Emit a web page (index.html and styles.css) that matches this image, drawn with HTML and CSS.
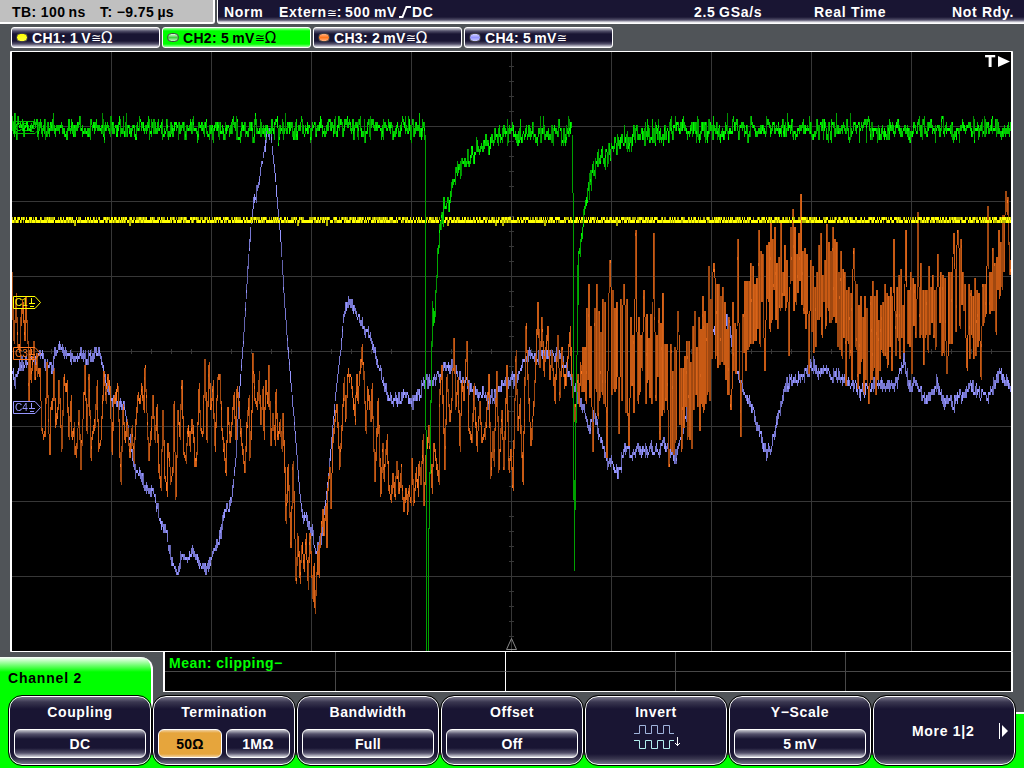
FILE: index.html
```html
<!DOCTYPE html>
<html lang="en">
<head>
  <meta charset="UTF-8">
  <meta name="viewport" content="width=device-width, initial-scale=1.0">
  <title>Oscilloscope</title>
  <link rel="stylesheet" href="styles.css">
</head>
<body>
  <!-- Status bar -->
  <header class="status-bar">
    <div class="timebase">
      <span>TB: 100&#8201;ns</span>
      <span>T: &minus;9.75&#8201;&micro;s</span>
    </div>
    <div class="trigger">
      <span>Norm</span>
      <span class="extern">Extern<i class="sym">&cong;</i>:</span>
      <span>500&#8201;mV</span>
      <svg class="edge" width="13" height="12" viewBox="0 0 13 12"><path d="M0 11H3.5L7.5 1H12" fill="none" stroke="#fff" stroke-width="2"/></svg>
      <span>DC</span>
      <span>2.5&#8201;GSa/s</span>
      <span>Real Time</span>
      <span class="state">Not Rdy.</span>
    </div>
  </header>

  <!-- Channels -->
  <nav class="channels">
    <div class="channel"><b class="led yellow"></b>CH1: 1&#8201;V<i class="sym">&cong;</i><i class="sym ohm">&Omega;</i></div>
    <div class="channel active"><b class="led green"></b>CH2: 5&#8201;mV<i class="sym">&cong;</i><i class="sym ohm">&Omega;</i></div>
    <div class="channel"><b class="led orange"></b>CH3: 2&#8201;mV<i class="sym">&cong;</i><i class="sym ohm">&Omega;</i></div>
    <div class="channel"><b class="led blue"></b>CH4: 5&#8201;mV<i class="sym">&cong;</i></div>
  </nav>

  <!-- Waveforms -->
  <main class="scope">
    <canvas id="plot" width="999" height="599"></canvas>
    <svg class="overlay" width="999" height="599" viewBox="12 52 999 599">
      <g fill="none" stroke-width="1">
        <path class="c1" d="M13.5 296.5H35L40.500 302.500L35 308.500H13.500Z"/>
        <path class="c2" d="M13.500 121.500H35L40.500 127.500L35 133.500H13.500Z"/>
        <path class="c3" d="M13.500 347.500H35L40.500 353.500L35 359.500H13.500Z"/>
        <path class="c4" d="M13.500 401.500H35L40.500 407.500L35 413.500H13.500Z"/>
        <path class="c1" d="M31.500 298V303M29 303.500H35M30 306.500H34"/>
        <path class="c2" d="M31.500 123V128M29 128.500H35M30 131.500H34"/>
        <path class="c3" d="M31.500 349V354M29 354.500H35M30 357.500H34"/>
        <path class="c4" d="M31.500 403V408M29 408.500H35M30 411.500H34"/>
        <path stroke="#8a8a8a" d="M511.500 638.500L506.500 649.500H516.500Z"/>
      </g>
      <g class="tag">
        <text x="15" y="306" fill="#ffff00">C1</text>
        <text x="15" y="131" fill="#00ff00">C2</text>
        <text x="15" y="357" fill="#ff7820">C3</text>
        <text x="15" y="411" fill="#9696ff">C4</text>
      </g>
      <text class="trig-mark" x="985" y="67">T</text>
      <path fill="#fff" d="M998 56L1010 61.500L998 67Z"/>
    </svg>
  </main>

  <!-- Measurement results -->
  <section class="bottom">
    <div class="tab">Channel 2</div>
    <div class="results">
      <div class="cell wide">Mean: clipping&minus;</div><div class="cell"></div><div class="cell"></div><div class="cell"></div><div class="cell last"></div>
      <div class="cell"></div><div class="cell"></div><div class="cell"></div><div class="cell"></div><div class="cell last"></div>
    </div>
  </section>

  <!-- Soft keys -->
  <footer class="softkeys">
    <div class="key"><span class="title">Coupling</span><div class="values"><span class="value">DC</span></div></div>
    <div class="key"><span class="title">Termination</span><div class="values"><span class="value selected">50&Omega;</span><span class="value">1M&Omega;</span></div></div>
    <div class="key"><span class="title">Bandwidth</span><div class="values"><span class="value">Full</span></div></div>
    <div class="key"><span class="title">Offset</span><div class="values"><span class="value">Off</span></div></div>
    <div class="key"><span class="title">Invert</span>
      <svg class="invert" width="48" height="26" viewBox="0 0 48 26" fill="none">
        <path stroke="#a0b4dc" d="M0 9.500H5.500V1.500H11.500V9.500H17.500V1.500H23.500V9.500H29.500V1.500H35.500V9.500H40"/>
        <path stroke="#b4f0f0" d="M0 16.500H5.500V24.500H11.500V16.500H17.500V24.500H23.500V16.500H29.500V24.500H35.500V16.500H40"/>
        <path stroke="#fff" d="M43.500 13V22M41 19L43.500 21.500L46 19"/>
      </svg>
    </div>
    <div class="key"><span class="title">Y&minus;Scale</span><div class="values"><span class="value">5&#8201;mV</span></div></div>
    <div class="key more"><span>More 1|2</span><svg width="10" height="16" viewBox="0 0 10 16"><path d="M.5 0V16" stroke="#fff"/><path d="M3 2L9 8L3 14Z" fill="#fff"/></svg></div>
  </footer>
  <script src="plot.js"></script>
</body>
</html>
```
FILE: plot.js
```js
const canvas = document.getElementById('plot');
const ctx = canvas.getContext('2d');
// use screen coordinates for all trace data
ctx.translate(-12, -52);

let seed = 20;
function rnd() {
  seed = (seed * 1103515245 + 12345) % 2147483648;
  return seed / 2147483648;
}

// Grid
ctx.fillStyle = '#373737';
for (let x = 111; x < 1011; x += 100) ctx.fillRect(x, 52, 1, 600);
for (let y = 126; y < 651; y += 75) ctx.fillRect(12, y, 1000, 1);
for (let x = 31; x < 1011; x += 20) ctx.fillRect(x, 349, 1, 5);
for (let y = 66; y < 651; y += 15) ctx.fillRect(509, y, 5, 1);

function at(points, x, col) {
  for (let i = 1; i < points.length; i++) {
    const a = points[i - 1];
    const b = points[i];
    if (x <= b[0]) {
      return a[col] + (b[col] - a[col]) * (x - a[0]) / Math.max(1, b[0] - a[0]);
    }
  }
  return points[points.length - 1][col];
}

function pairs(text) {
  return text.trim().split(/\s+/).map(p => p.split(',').map(Number));
}

// One pixel wide column, three pixel vertical steps. Long columns are dimmer.
function column(x, y1, y2, colors) {
  const top = Math.round(Math.min(y1, y2) / 3) * 3 - 1;
  const h = Math.max(3, Math.round(Math.abs(y2 - y1) / 3) * 3);
  let c = h <= 4 ? 0 : h < 13 ? 1 : 2;
  if (rnd() < 0.12) c = Math.max(0, c - 1);
  if (h > 15 && rnd() < 0.4) c = 3;
  ctx.fillStyle = colors[c];
  ctx.fillRect(x, top, 1, h);
  // brighter spot where the trace dwells
  if (h > 6 && rnd() < 0.3) {
    ctx.fillStyle = colors[h > 30 ? 1 : 0];
    ctx.fillRect(x, top + Math.floor(rnd() * h / 3) * 3, 1, 3);
  }
}

const BLUE = ['#9696ff', '#7878d2', '#6464af', '#6464af'];
const ORANGE = ['#ff7820', '#d8641a', '#c85a14', '#a04810'];
const GREEN = ['#00ff00', '#00cc00', '#00aa00', '#009000'];

// Channel 4
const ch4 = pairs(`12,375 14,383 18,368 23,362 33,363 40,352 45,368 52,366 55,350 60,346 67,358 73,363
80,353 87,360 97,350 102,365 107,393 115,405 123,406 128,437 135,472 140,477 148,495 152,490 162,530
165,532 172,567 176,577 182,553 187,560 192,550 200,567 206,570 212,557 218,542 224,510 230,507 235,460
238,400 242,347 245,303 247,267 250,227 253,203 257,187 260,172 263,153 266,134 270,134 276,197 280,243
283,293 287,350 293,417 299,497 302,517 307,522 312,537 316,553 320,543 324,507 327,483 331,437 336,383
340,350 343,315 349,300 355,313 362,330 368,337 375,357 382,380 388,403 397,400 405,395 412,402 418,397
423,383 432,383 443,370 453,367 458,377 467,385 475,397 483,392 488,402 497,393 508,380 515,383 520,367
528,355 543,357 557,357 565,367 570,378 577,400 582,407 588,430 593,413 600,443 607,465 612,465 618,475
625,447 630,455 637,450 643,453 652,447 658,453 663,445 670,453 675,457 680,437 690,403 697,377 703,350
720,318 727,323 733,357 737,377 743,392 753,413 762,447 767,455 773,440 780,405 785,387 790,382 800,380
813,365 820,378 824,370 830,380 835,373 842,383 850,383 860,393 868,388 877,382 885,387 892,390 897,380
903,362 910,392 915,378 922,400 930,398 936,382 942,403 948,400 953,407 957,393 963,400 970,387 977,393
987,400 997,377 1003,380 1011,393`);
let prev = 375;
for (let x = 12; x < 1011; x++) {
  const slope = Math.abs(at(ch4, x + 2, 1) - at(ch4, x - 2, 1));
  const steep = slope > 24;
  const y = at(ch4, x, 1) + (rnd() - 0.5) * (steep ? 3 : 10);
  const pad = steep ? 0 : rnd() * 4;
  column(x, Math.min(prev, y) - pad, Math.max(prev, y) + pad, BLUE);
  prev = y;
}

// Channel 3, quiet part
const ch3 = pairs(`12,310 13,343 15,300 17,345 19,351 20,320 22,302 24,340 25,300 27,345 28,399 29,352 30,382
32,360 33,343 34,380 36,355 37,375 39,372 41,430 42,436 44,436 46,365 48,435 49,453 50,410 52,400 53,373
55,425 57,410 58,382 61,450 63,379 65,390 66,390 68,438 70,403 71,437 73,430 74,455 76,445 78,413 80,469
82,420 84,370 86,433 88,376 90,459 91,440 94,420 96,388 98,450 100,440 103,373 105,400 107,377 109,391
111,450 113,400 117,388 119,455 120,483 122,412 124,440 126,425 129,457 131,430 133,460 135,420 137,397
139,405 141,388 143,410 144,370 146,415 148,460 150,435 152,400 154,440 156,412 158,470 160,489 162,410
164,478 166,490 167,445 170,482 172,470 173,409 175,498 177,415 179,435 181,382 183,455 185,462 187,430
189,445 191,420 193,442 194,468 196,455 198,391 200,432 202,435 204,361 206,438 208,367 210,410 212,388
214,446 217,380 219,376 221,430 223,448 225,472 227,410 229,440 231,425 233,395 235,440 236,391 238,405
240,435 244,474 246,425 248,402 249,459 251,412 252,358 254,400 256,405 258,382 260,425 262,391 263,433
265,385 267,405 268,367 270,445 272,415 274,440 275,394 277,440 279,425 281,450 282,415 284,470 285,522
287,470 288,490 290,549 292,467 293,500 295,580 297,538 299,579 301,546 303,568 305,541 307,582 309,535
310,555 312,600 313,568 314,609 316,575 317,553 318,573 319,545 322,510 323,535 325,508 326,546 327,490
329,470 330,507 332,440 335,415 336,406 339,468 341,425 343,385 345,420 347,376 350,378 352,400 354,418
356,376 357,399 361,350 363,378 365,432 367,391 370,420 371,391 374,480 377,403 380,495 382,445 383,478
386,442 388,490 390,502 392,475 394,495 396,463 398,495 400,474 402,500 403,514 405,490 407,513 408,493
410,506 411,460 413,505 415,475 417,490 418,465 420,485 422,442 423,507 425,460 428,427 431,487 433,445
435,460 438,483 439,390 441,367 444,468 446,377 449,423 451,400 453,340 455,407 457,380 459,445 461,383
463,403 466,343 468,430 471,442 473,390 476,448 479,403 481,441 484,437 486,410 488,377 490,478 492,433
493,460 496,373 498,472 501,412 503,470 506,367 508,471 510,450 512,487 515,358 517,430 519,407 522,483
525,328 527,380 530,445 533,403 535,360 537,304 539,367 541,320 543,372 547,328 549,380 551,355 554,400
557,337 559,400 561,350 564,388 567,360 569,333 572,397 574,422 577,377 578,403 581,347`);
prev = 320;
for (let x = 12; x < 581; x++) {
  const a = at(ch3, x - 1, 1);
  const b = at(ch3, x, 1);
  const y = b + (rnd() - 0.5) * 12;
  column(x, Math.min(a, b, prev) - rnd() * 3, Math.max(a, b, prev) + rnd() * 3, ORANGE);
  prev = y;
}

// Channel 3, noisy part: x, top, bottom of the band
const band = pairs(`581,340,400 586,305,405 592,300,415 600,300,415 612,290,405 622,300,410 632,300,415
642,295,410 655,300,415 664,315,430 672,345,455 680,330,445 690,325,435 700,300,410 710,275,395 720,285,372
730,300,400 738,290,390 746,280,370 756,245,345 764,240,330 772,230,320 782,240,325 792,225,310 800,225,300
806,250,340 815,255,350 825,230,335 835,240,345 845,260,370 855,275,385 863,290,392 875,285,385 885,285,365
895,280,370 905,265,365 915,270,350 925,265,350 935,260,345 945,270,360 953,240,335 960,240,330 970,275,360
978,275,360 986,250,325 994,245,325 1000,220,290 1006,205,275 1011,270,290`);
const spikes = pairs(`588,286 592,453 596,286 606,460 609,262 618,435 623,286 628,448 635,232 643,292 653,235
659,442 662,295 668,468 677,313 681,451 691,450 699,433 708,268 713,265 730,411 737,241 740,436 758,232
764,372 770,221 780,222 788,357 792,211 800,196 808,375 820,235 826,226 832,229 845,387 851,382 853,250
863,395 868,405 875,397 893,241 905,232 911,375 917,214 923,367 937,255 946,375 953,235 957,232 966,370
980,379 987,208 995,334 1005,193 1007,197`);
let up = false;
for (let x = 581; x < 1011; x++) {
  const top = at(band, x, 1) - 4;
  const bottom = at(band, x, 2) + 8;
  const size = bottom - top;
  const spike = spikes.find(s => s[0] === x);
  let y = up ? top + rnd() * size * 0.38 : bottom - rnd() * size * 0.38;
  if (spike) y = spike[1];
  column(x, prev, y, ORANGE);
  up = !up;
  prev = y;
}

// Channel 1
for (let x = 12; x < 1011; x++) {
  const r = rnd();
  ctx.fillStyle = r < 0.35 ? '#ffff00' : '#b4b400';
  if (r < 0.7) ctx.fillRect(x, 217, 1, 3);
  ctx.fillStyle = r > 0.3 ? '#ffff00' : '#b4b400';
  if (rnd() < 0.85 || r >= 0.7) ctx.fillRect(x, 220, 1, 3);
  if (rnd() < 0.015) {
    ctx.fillStyle = '#b4b400';
    ctx.fillRect(x, 220, 2, 6);
  }
}

// Channel 2: x, y
const ch2 = pairs(`12,130 424,130 430,380 431,343 432,320 434,310 436,283 437,253 439,230 441,220 443,208
448,205 451,187 457,173 460,168 465,160 470,153 480,147 490,143 500,136 533,133 572,134 576,350 577,303
578,263 580,243 583,220 585,203 588,187 592,175 600,160 608,152 620,142 633,137 660,133 690,131 1011,130`);
prev = 130;
for (let x = 12; x < 1011; x++) {
  if ((x > 424 && x < 431) || (x > 571 && x < 577)) {
    prev = at(ch2, x, 1);
    continue;
  }
  const mid = at(ch2, x, 1);
  const y = mid + (rnd() + rnd() - 1) * 12;
  let top = Math.min(prev, y) - rnd() * 4;
  let bottom = Math.max(prev, y) + rnd() * 4;
  if (rnd() < 0.04) top = mid - 10 - rnd() * 7;
  if (rnd() < 0.03) bottom = mid + 9 + rnd() * 7;
  column(x, top, bottom, GREEN);
  prev = y;
}
ctx.fillStyle = '#00a000';
ctx.fillRect(425, 135, 1, 295);
ctx.fillRect(426, 430, 1, 222);
ctx.fillRect(428, 528, 1, 124);
ctx.fillRect(429, 472, 1, 57);
ctx.fillRect(430, 400, 1, 74);
ctx.fillRect(431, 343, 1, 60);
ctx.fillRect(432, 301, 1, 40);
ctx.fillRect(572, 135, 1, 58);
ctx.fillRect(573, 193, 1, 307);
ctx.fillRect(574, 480, 1, 91);
ctx.fillRect(575, 420, 1, 90);
ctx.fillRect(576, 355, 1, 68);
ctx.fillRect(577, 265, 1, 90);
```
FILE: styles.css
```css
* {
  margin: 0;
  padding: 0;
  box-sizing: border-box;
}
body {
  width: 1024px;
  height: 768px;
  overflow: hidden;
  background: #505458;
  color: #fff;
  font-family: "Liberation Sans", Arial, sans-serif;
  font-size: 14px;
  font-weight: bold;
  letter-spacing: 0.7px;
  white-space: nowrap;
}

/* Status bar */
.status-bar {
  display: flex;
  gap: 2px;
  height: 24px;
  line-height: 24px;
}
.timebase {
  width: 215px;
  padding-left: 12px;
  display: grid;
  grid-template-columns: 88px 1fr;
  background: #c0c0c0;
  color: #000;
  border-right: 2px solid #fff;
  border-bottom: 2px solid #fff;
  border-bottom-right-radius: 3px;
  letter-spacing: 0.4px;
}
.trigger {
  flex: 1;
  display: grid;
  grid-template-columns: 55px 66px 54px 13px 282px 120px 138px 1fr;
  padding-left: 6px;
  background: linear-gradient(#191533 17px, #53506a 20px, #d8d8e0 22px, #fff 23px);
  border-left: 1px solid #fff;
  border-bottom-left-radius: 3px;
  letter-spacing: 0.7px;
}
.edge {
  margin-top: 6px;
}
.sym {
  font-family: "DejaVu Sans", sans-serif;
  font-style: normal;
  font-weight: normal;
  font-size: 12px;
  letter-spacing: 0;
}
.ohm {
  font-size: 15px;
}

/* Channels */
.channels {
  display: flex;
  gap: 2px;
  padding: 3px 0 0 11px;
  height: 27px;
}
.channel {
  display: flex;
  align-items: center;
  width: 149px;
  height: 21px;
  padding-left: 4px;
  border: 1px solid #fff;
  border-radius: 3px;
  background: linear-gradient(#d0d0d8, #53506a 3px, #191533 6px, #191533 13px, #53506a 16px, #e0e0e8);
  letter-spacing: 0.3px;
}
.channel.active {
  background: linear-gradient(#a0ffa0, #00ff00 3px, #00ff00 16px, #a0ffa0);
  color: #000;
}
.led {
  width: 12px;
  height: 9px;
  margin-right: 4px;
  border: 1px solid #444;
  border-radius: 5px;
}
.yellow {
  background: linear-gradient(#ffff00, #ffff40);
}
.green {
  background: linear-gradient(#e0ffe0, #40d040, #c0ffc0);
}
.orange {
  background: linear-gradient(#ffb080, #ff7820, #ffb080);
}
.blue {
  background: linear-gradient(#d0d0ff, #9696ff, #c8c8ff);
}

/* Waveforms */
.scope {
  position: relative;
  width: 1003px;
  height: 601px;
  margin-left: 10px;
  border: 1px solid #fff;
  border-width: 1px 2px;
  border-radius: 1px;
  background: #000;
}
.scope canvas {
  display: block;
}
.overlay {
  position: absolute;
  left: 0;
  top: 0;
}
.c1 {
  stroke: #ffff00;
}
.c2 {
  stroke: #00c000;
}
.c3 {
  stroke: #ff7820;
}
.c4 {
  stroke: #9696ff;
}
.tag {
  font-size: 10px;
  font-weight: normal;
  letter-spacing: 0;
}
.trig-mark {
  fill: #fff;
  font-family: "DejaVu Sans", sans-serif;
  font-size: 15px;
}

/* Measurement results */
.bottom {
  display: flex;
  align-items: flex-start;
  gap: 10px;
  height: 44px;
}
.tab {
  width: 153px;
  height: 80px;
  margin-top: 5px;
  padding: 13px 0 0 8px;
  background: linear-gradient(#fff, #00ff00 15px);
  border-right: 2px solid #fff;
  border-top-right-radius: 12px;
  color: #000;
  letter-spacing: 0.8px;
}
.results {
  display: grid;
  grid-template-columns: 171px 170px 170px 170px 165px;
  grid-template-rows: 20px 19px;
  width: 850px;
  height: 40px;
  border: 1px solid #fff;
  border-width: 0 2px 1px;
  background: #000;
  color: #00ff00;
  letter-spacing: 0.5px;
}
.cell {
  border-right: 1px solid #484848;
  line-height: 22px;
}
.cell:nth-child(-n+5) {
  border-bottom: 1px solid #484848;
}
.cell:nth-child(5n+2) {
  border-right-color: #fff;
}
.cell.wide {
  padding-left: 4px;
}
.cell.last {
  border-right: none;
}

/* Soft keys */
.softkeys {
  position: relative;
  display: flex;
  gap: 2px;
  height: 72px;
  padding-left: 9px;
  background:
    linear-gradient(#00ff00, #00ff00) left / 9px 100% no-repeat,
    linear-gradient(#fff 2px, #00ff00 2px) right 16px / 9px 100% no-repeat,
    linear-gradient(#00ff00, #00ff00) left bottom / 100% 13px no-repeat;
}
.key {
  display: flex;
  flex-direction: column;
  align-items: center;
  width: 142px;
  height: 69px;
  padding: 7px 4px 0;
  border: 1px solid #fff;
  border-radius: 13px;
  outline: 1px solid #000;
  background: linear-gradient(#77758a, #3a3750 5px, #191533 12px, #191533 57px, #3a3750 62px, #77758a);
}
.title {
  line-height: 16px;
  letter-spacing: 0.6px;
}
.values {
  display: flex;
  gap: 4px;
  width: 100%;
  margin-top: 9px;
}
.value {
  flex: 1;
  height: 29px;
  line-height: 28px;
  border: 1px solid #fff;
  border-radius: 6px;
  background: linear-gradient(#c8c8d0, #53506a 4px, #191533 9px, #191533 18px, #53506a 23px, #d8d8e0);
  text-align: center;
  letter-spacing: 0.3px;
}
.value.selected {
  background: linear-gradient(#f0d0a0, #e6a53c 3px, #e6a53c 24px, #f0d0a0);
  color: #000;
}
.invert {
  margin: 4px 0 0 4px;
}
.more {
  flex-direction: row;
  padding: 0 5px 0 38px;
  justify-content: space-between;
}
```
